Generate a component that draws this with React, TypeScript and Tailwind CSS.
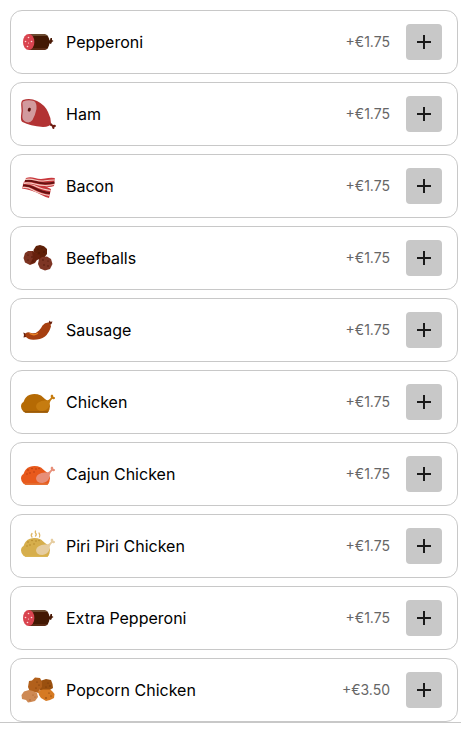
import type { ReactNode } from "react";

type Topping = {
  name: string;
  price: string;
  icon: ReactNode;
};

function Pepperoni() {
  return (
    <>
      <path d="M28 17 L30 16 L30.500 14 L32 14 L32 16 L33.500 17 L32 18 L31 20 L28 19Z" fill="#4a1a06" />
      <path d="M9 10 H24 Q29.500 11 29.500 18 Q29.500 25 24 26 H9Z" fill="#431803" />
      <path d="M9 10 H24 Q27 10.500 28 12 H9Z" fill="#6b4a30" />
      <path d="M10 26 H24 Q27 25.500 28 24 H12Z" fill="#5b2a14" />
      <ellipse cx="8.700" cy="18" rx="5.700" ry="8" fill="#d9444f" />
      <g fill="#ffd9d9">
        <circle cx="8.500" cy="13.500" r=".8" />
        <circle cx="5.500" cy="17.500" r=".8" />
        <circle cx="11.500" cy="17.500" r=".8" />
        <circle cx="8.500" cy="19" r=".6" />
        <circle cx="7.500" cy="22.500" r=".8" />
      </g>
    </>
  );
}

function Ham() {
  return (
    <>
      <path d="M29 27 L31 27 L33 29 Q35.500 28 36 30 Q36 31 34.500 31 Q34.800 33.500 33 33 Q32 32 32 30.500 L29 29Z" fill="#6d1b10" />
      <path d="M3 4 Q10 1.500 17 5 Q25 9 28 16 Q31 22 31 27 Q30 31 23 31 Q10 30 2.500 26 Q0.500 25 1 20 Q2 15 1.200 9 Q1 5 3 4Z" fill="#b23233" />
      <path d="M3 5.500 Q8 3.500 14 5 Q17 7 16.500 13 Q15 20 12.500 24 Q10 27.500 6 26 Q2 24.500 2.300 20 Q3.300 15 2.500 9 Q2 6.500 3 5.500Z" fill="#d29a9e" />
      <ellipse cx="9.300" cy="13.700" rx="1.500" ry="2" fill="#5c120d" transform="rotate(20 9.300 13.700)" />
    </>
  );
}

function Bacon() {
  return (
    <>
      <path d="M4 13.500 Q10 14 15 15.500 T25 18 L31 21 L29 30 Q25 29 20.500 26.500 T11 22.500 T2 20.500Z" fill="#c8373c" />
      <path d="M3 17.500 Q8 17 13 19.500 T22 23.500 T30 25" fill="none" stroke="#651111" strokeWidth="2" />
      <path d="M4 15.500 Q9 15 14 17.500 T23 21 T30.500 22.500 M2.500 19.500 Q8 19 12 21.500 T21 25.500 T29.500 27.500" fill="none" stroke="#f3cfc6" strokeWidth="1.100" />
      <path d="M6 10 Q10 8.500 15 10 T25 10.500 T34.800 10 L34 18 Q30 19.500 25 18.500 T15 17 T4 15Z" fill="#c8373c" />
      <path d="M5 13 Q10 12.300 15 13.800 T25 15.500 T34.500 14.500" fill="none" stroke="#651111" strokeWidth="2" />
      <path d="M5 11.500 Q10 10.500 15 12 T25 12.800 T34.500 12 M4 15 Q10 14.500 15 16 T25 17.500 T34.300 16.500" fill="none" stroke="#f3cfc6" strokeWidth="1.100" />
    </>
  );
}

function Beefballs() {
  return (
    <>
      <path d="M16 6 L20 5 L24 6.300 L27 9 L27 14 L24 18 L19 19 L14 16 L13.500 10Z" fill="#5f2008" strokeLinejoin="round" />
      <path d="M8 11 L13 11 L17 14 L17.500 19 L15 23 L10 25 L5 22.500 L3.500 18 L5 13Z" fill="#7c3321" />
      <path d="M12 11 L17 14 L17.500 19 L14 23 L10 24 L13 18Z" fill="#67210d" />
      <path d="M22 17 L27 16.500 L31 19 L32.500 24 L30 29 L25 30.500 L20 28.500 L18 24 L19 19Z" fill="#7d3524" />
      <path d="M14 13 L20 15.500 L21 18 L17.500 20 L15 17Z" fill="#67210d" />
      <g fill="#451405">
        <circle cx="18" cy="9" r=".6" /><circle cx="22" cy="8" r=".6" /><circle cx="24" cy="12" r=".7" />
        <circle cx="19" cy="13" r=".7" /><circle cx="8" cy="15" r=".6" /><circle cx="12" cy="17" r=".7" />
        <circle cx="8" cy="20" r=".6" /><circle cx="13" cy="21" r=".6" /><circle cx="23" cy="20" r=".7" />
        <circle cx="28" cy="21" r=".6" /><circle cx="24" cy="25" r=".7" /><circle cx="28" cy="26" r=".7" />
      </g>
    </>
  );
}

function Sausage() {
  return (
    <>
      <path d="M3.300 20.500 L7 22 L6 25 L3.500 25.500 L4 23Z M28.500 11 L29.500 8.500 L30.500 9.700 L32.500 9.500 L31.500 12 L29.500 13Z" fill="#6b210c" />
      <path d="M6 21 Q8 19.500 11 21 Q16 22 19 18.500 Q21 16.500 22.500 13.500 Q25 10.300 28.500 10.500 Q31 11.500 31 14.500 Q29 21 25 24.500 Q20 28 13 27.800 Q8 27.500 6 25 Q4.500 23 6 21Z" fill="#a63f10" />
      <path d="M10 21.500 Q14 24 17.500 21.500" fill="none" stroke="#e98124" strokeWidth="1.300" strokeLinecap="round" />
    </>
  );
}

type ChickenProps = {
  body: string;
  base: string;
  leg: string;
  spots?: string;
  steam?: string;
};

function Chicken({ body, base, leg, spots, steam }: ChickenProps) {
  return (
    <>
      <path d="M1 22.500 Q1 19 3.500 18 Q5 12.500 10 10.800 Q15 9 21 11.500 Q23 13 25 15 Q29 17 30 22 Q30 26 27.500 28.800 H5.500 Q1.500 27 1 22.500Z" fill={body} />
      <path d="M3 27 H28.800 L27.500 28.800 H5.500Z" fill={base} />
      <path d="M25 16.500 Q29 17 31 13.500 Q30 11 32 10.500 Q33.500 11 33.300 12.700 Q35.500 13 35 14.500 Q34 15.800 32.500 14.700 Q29.500 17 29.500 21 Q28.500 26 22.500 27 Q16 27 16 22 Q17 17 25 16.500Z" fill={leg} />
      {spots && (
        <g fill={spots}>
          <circle cx="8" cy="14" r=".8" /><circle cx="12" cy="12.500" r=".8" /><circle cx="16" cy="13" r=".8" />
          <circle cx="10" cy="17" r=".8" /><circle cx="14" cy="16" r=".8" /><circle cx="7" cy="18" r=".7" />
          <circle cx="19" cy="12.500" r=".7" />
        </g>
      )}
      {steam && (
        <path d="M12 9 Q10.500 7.500 12 5.500 M15.500 8 Q17 6.500 15.500 5 Q15 4.500 15.500 3 M19.500 9 Q20.500 7.500 19 5" fill="none" stroke={steam} strokeWidth="1.300" strokeLinecap="round" />
      )}
    </>
  );
}

function Popcorn() {
  return (
    <>
      <path d="M20 9 L26 7 L31 8 L32.500 12 L33 16 L29 18.500 L20 18.500Z" fill="#9a500f" />
      <path d="M9 9 L12 8.500 L15 5.500 L20 6 L22 10 L22 15 L20 17 L19 21 L14 20 L10 20 L8 15Z" fill="#b2601b" />
      <path d="M18 19 L23 17.500 L30 17.500 L32 19 L34.500 22 L34 26 L30 28 L26 29 L21 26 L19 23Z" fill="#d67a23" />
      <path d="M1.500 23 L4 19.500 L9 18 L13 19 L17 21 L18 25 L15 29 L11 30 L8 30.500 L6 28 L2 27Z" fill="#ce8953" />
      <g fill="#6d3209">
        <circle cx="17" cy="10" r=".6" /><circle cx="19" cy="13" r=".6" /><circle cx="16" cy="16" r=".6" />
        <circle cx="28" cy="11" r=".6" /><circle cx="30" cy="14" r=".7" /><circle cx="26" cy="15" r=".6" />
        <circle cx="29" cy="21" r=".6" /><circle cx="31" cy="24" r=".6" /><circle cx="26" cy="26" r=".7" />
      </g>
      <g fill="#a35b2e">
        <circle cx="13" cy="23" r=".6" /><circle cx="15" cy="25" r=".6" /><circle cx="10" cy="28" r=".7" />
      </g>
    </>
  );
}

const toppings: Topping[] = [
  { name: "Pepperoni", price: "1.75", icon: <Pepperoni /> },
  { name: "Ham", price: "1.75", icon: <Ham /> },
  { name: "Bacon", price: "1.75", icon: <Bacon /> },
  { name: "Beefballs", price: "1.75", icon: <Beefballs /> },
  { name: "Sausage", price: "1.75", icon: <Sausage /> },
  { name: "Chicken", price: "1.75", icon: <Chicken body="#b56a04" base="#9c5b08" leg="#c67c10" /> },
  { name: "Cajun Chicken", price: "1.75", icon: <Chicken body="#e8591c" base="#e36a2c" leg="#e78e78" spots="#b83c10" /> },
  { name: "Piri Piri Chicken", price: "1.75", icon: <Chicken body="#d6ae4c" base="#d8b04a" leg="#e6cda0" spots="#b48a2c" steam="#dfb765" /> },
  { name: "Extra Pepperoni", price: "1.75", icon: <Pepperoni /> },
  { name: "Popcorn Chicken", price: "3.50", icon: <Popcorn /> },
];

function ToppingRow({ name, price, icon }: Topping) {
  return (
    <li className="flex h-16 items-center rounded-xl border border-[#c8c8c8] bg-white pl-[9px] pr-[15px]">
      <svg viewBox="0 0 36 36" className="size-9 shrink-0" aria-hidden="true">
        {icon}
      </svg>
      <span className="ml-2.5 flex-1 text-base text-black">{name}</span>
      <span className="mr-4 text-sm text-[#666666]">+€{price}</span>
      <button
        type="button"
        aria-label={`Add ${name}`}
        className="flex size-9 items-center justify-center rounded bg-[#c8c8c8] text-[#1a1a1a]"
      >
        <svg viewBox="0 0 14 14" className="size-3.5" aria-hidden="true">
          <path d="M7 0 V14 M0 7 H14" stroke="currentColor" strokeWidth="2" />
        </svg>
      </button>
    </li>
  );
}

export default function App() {
  return (
    <main className="bg-white font-['Inter',sans-serif]">
      {/* toppings list */}
      <ul className="flex flex-col gap-2 border-b border-[#c8c8c8] pt-[10px] pr-[3px] pl-[10px]">
        {toppings.map((topping) => (
          <ToppingRow key={topping.name} {...topping} />
        ))}
      </ul>
    </main>
  );
}
